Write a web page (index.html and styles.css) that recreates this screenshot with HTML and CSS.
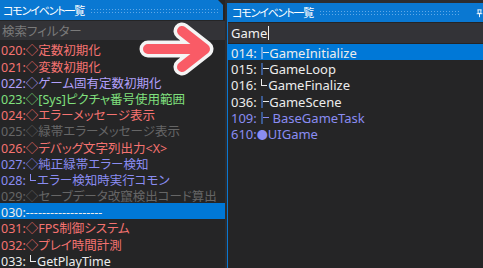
FILE: index.html
```html
<!DOCTYPE html>
<html lang="ja">
<head>
    <meta charset="UTF-8">
    <title>コモンイベント一覧</title>
    <link rel="stylesheet" href="styles.css">
</head>
<body>
    <div id="okno">
        <div class="panel lewy">
            <div class="naglowek">
                <span class="tytul">コモンイベント一覧</span>
                <span class="kropki"></span>
            </div>
            <div class="szukaj"><span class="placeholder">検索フィルター</span></div>
            <div class="lista">
                <div class="wiersz czerwony">020:◇定数初期化</div>
                <div class="wiersz czerwony">021:◇変数初期化</div>
                <div class="wiersz rozowy">022:◇ゲーム固有定数初期化</div>
                <div class="wiersz zielony">023:◇[Sys]ピクチャ番号使用範囲</div>
                <div class="wiersz czerwony">024:◇エラーメッセージ表示</div>
                <div class="wiersz szary">025:◇緑帯エラーメッセージ表示</div>
                <div class="wiersz czerwony">026:◇デバッグ文字列出力&lt;X&gt;</div>
                <div class="wiersz fiolet">027:◇純正緑帯エラー検知</div>
                <div class="wiersz fiolet">028: <span class="koniec"></span>エラー検知時実行コモン</div>
                <div class="wiersz szary">029:◇セーブデータ改竄検出コード算出</div>
                <div class="wiersz bialy wybrany">030:-------------------</div>
                <div class="wiersz czerwony">031:◇FPS制御システム</div>
                <div class="wiersz czerwony">032:◇プレイ時間計測</div>
                <div class="wiersz bialy">033: <span class="koniec"></span>GetPlayTime</div>
            </div>
        </div>

        <div class="panel prawy">
            <div class="naglowek">
                <span class="tytul">コモンイベント一覧</span>
                <span class="kropki"></span>
                <span class="pinezka">
                    <svg width="10" height="12" viewBox="0 0 10 12">
                        <path d="M2 1.5h6M3 1.5v5h4v-5M1 7h8M5 7v5" fill="none" stroke="#fff" stroke-width="1.3"/>
                    </svg>
                </span>
            </div>
            <div class="szukaj"><span class="wpisane">Game</span><span class="kursor"></span></div>
            <div class="lista">
                <div class="wiersz bialy wybrany">014: <span class="galaz"></span>GameInitialize</div>
                <div class="wiersz bialy">015: <span class="galaz"></span>GameLoop</div>
                <div class="wiersz bialy">016: <span class="koniec"></span>GameFinalize</div>
                <div class="wiersz bialy">036: <span class="galaz"></span>GameScene</div>
                <div class="wiersz fiolet">109: <span class="galaz"></span> BaseGameTask</div>
                <div class="wiersz fiolet">610:<span class="kropka">●</span>UIGame</div>
            </div>
        </div>
    </div>

    <svg class="strzalka" width="90" height="64" viewBox="138 20 90 64">
        <path d="M148 49H204M182 31L205 49L182 67" fill="none" stroke="#f4f4f4" stroke-width="17" stroke-linecap="round" stroke-linejoin="round"/>
        <path d="M148 49H204M182 31L205 49L182 67" fill="none" stroke="#f95b66" stroke-width="10" stroke-linecap="round" stroke-linejoin="round"/>
    </svg>
</body>
</html>
```

FILE: styles.css
```css
*{
    font-family: "Noto Sans", "Noto Sans CJK JP", sans-serif;
    font-feature-settings: "palt";
}
body{
    margin: 0;
    background-color: #2d2d30;
    width: 483px;
    height: 268px;
    overflow: hidden;
    position: relative;
}

#okno{
    display: flex;
    gap: 2px;
    height: 268px;
}

.panel{
    display: flex;
    flex-direction: column;
    background-color: #252526;
}
.lewy{
    width: 225px;
}
.prawy{
    flex: 1;
    margin-top: 3px;
    border-left: 1px solid #0a78d2;
    min-width: 0;
}

.naglowek{
    display: flex;
    align-items: center;
    gap: 6px;
    height: 22px;
    padding-left: 3px;
    background-color: #0a78d2;
    color: white;
    font-size: 11px;
}
.lewy .naglowek{
    clip-path: polygon(0 0, calc(100% - 7px) 0, calc(100% - 2px) 5px, calc(100% - 2px) 100%, 0 100%);
}
.prawy .naglowek{
    height: 19px;
    padding-left: 4px;
}
.tytul{
    white-space: nowrap;
    line-height: 19px;
    letter-spacing: -1.2px;
}
.kropki{
    flex: 1;
    height: 5px;
    margin-right: 6px;
    background-image: radial-gradient(circle, #5fa8e8 0.8px, transparent 1px);
    background-size: 3px 3px;
}
.prawy .kropki{
    margin-right: 10px;
}
.pinezka{
    width: 7px;
    height: 14px;
    overflow: hidden;
    display: flex;
    align-items: center;
}

.szukaj{
    display: flex;
    align-items: center;
    height: 20px;
    margin-top: 1px;
    padding-left: 2px;
    background-color: #333337;
    font-size: 12.5px;
}
.prawy .szukaj{
    padding-left: 3px;
    font-size: 13px;
}
.placeholder{
    color: #7a7a7a;
}
.wpisane{
    color: #f0f0f0;
}
.kursor{
    width: 1px;
    height: 14px;
    margin-left: 1px;
    background-color: #f0f0f0;
}

.lista{
    flex: 1;
    padding-top: 1px;
    font-size: 12.5px;
}
.prawy .lista{
    font-size: 13px;
}
.wiersz{
    box-sizing: border-box;
    height: 16.2px;
    padding-top: 3px;
    line-height: 13.2px;
    padding-left: 1px;
    white-space: nowrap;
}
.prawy .wiersz{
    padding-left: 3px;
}
.wybrany{
    background-color: #0078d7;
}

.czerwony{ color: #f57371; }
.rozowy{ color: #b2a0fb; }
.zielony{ color: #80e07e; }
.szary{ color: #666666; }
.fiolet{ color: #8a8cf2; }
.bialy{ color: #ececec; }

.galaz{
    display: inline-block;
    position: relative;
    width: 8px;
    height: 12px;
    margin-left: 1px;
    vertical-align: -1px;
    border-left: 2px solid #3b5a92;
    box-sizing: border-box;
}
.galaz::after{
    content: "";
    position: absolute;
    left: 0;
    top: 5px;
    width: 6px;
    height: 1px;
    background-color: currentColor;
}
.wybrany .galaz{
    border-left-color: #6aa6e6;
}
.koniec{
    display: inline-block;
    width: 6px;
    height: 7px;
    margin-left: 1px;
    margin-right: 1px;
    vertical-align: 4px;
    border-left: 1px solid currentColor;
    border-bottom: 1px solid currentColor;
    box-sizing: border-box;
}
.kropka{
    font-size: 11px;
}

.strzalka{
    position: absolute;
    left: 138px;
    top: 20px;
}
```
